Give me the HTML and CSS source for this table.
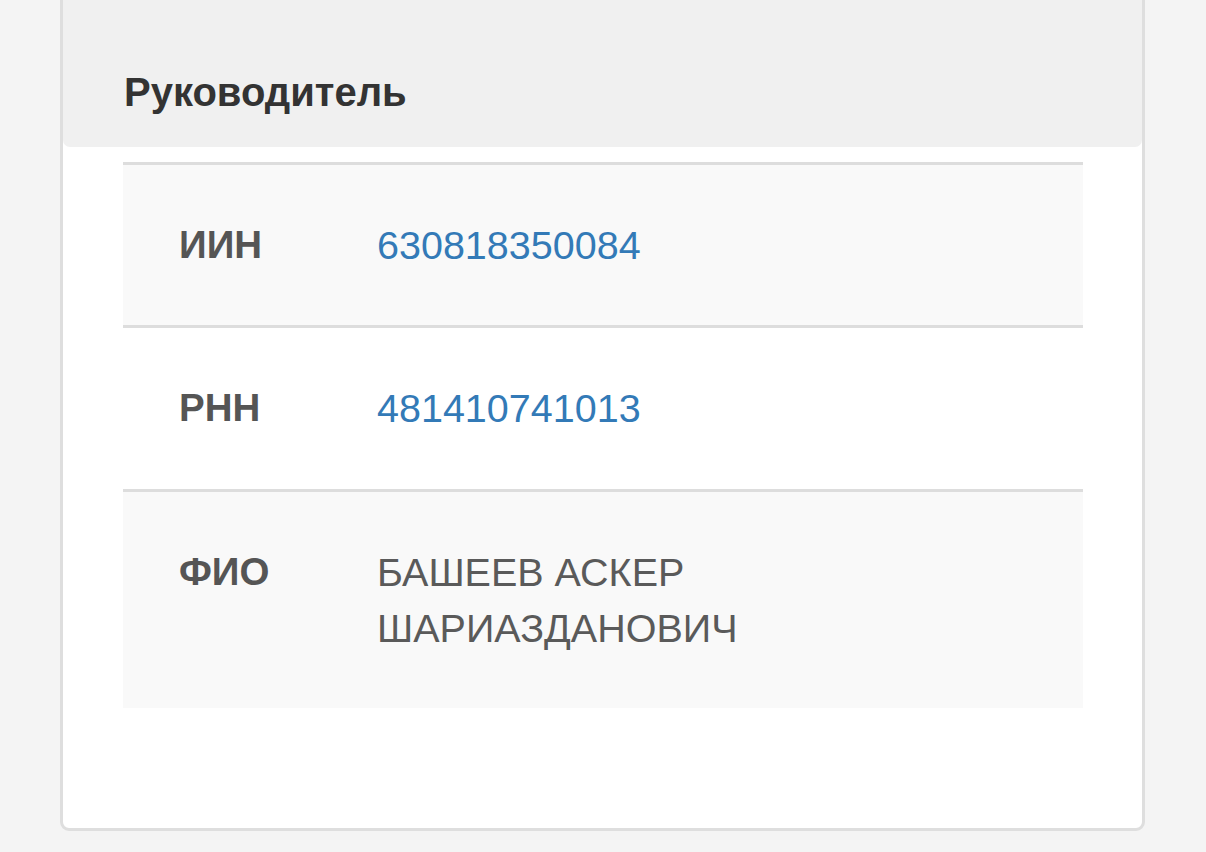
FILE: index.html
```html
<!DOCTYPE html>
<html lang="ru">
<head>
<meta charset="utf-8">
<title>Руководитель</title>
<link rel="stylesheet" href="styles.css">
</head>
<body>
<div class="page">
  <section class="panel">
    <header class="panel-heading">
      <h3 class="panel-title">Руководитель</h3>
    </header>
    <div class="panel-body">
      <div class="info-table">
        <div class="row striped">
          <div class="label">ИИН</div>
          <div class="value"><a href="#">630818350084</a></div>
        </div>
        <div class="row middle">
          <div class="label">РНН</div>
          <div class="value"><a href="#">481410741013</a></div>
        </div>
        <div class="row striped last">
          <div class="label">ФИО</div>
          <div class="value">БАШЕЕВ АСКЕР<br>ШАРИАЗДАНОВИЧ</div>
        </div>
      </div>
    </div>
  </section>
</div>
</body>
</html>
```

FILE: styles.css
```css
html, body {
  margin: 0;
  padding: 0;
  background: #f4f4f4;
  font-family: "Liberation Sans", Arial, sans-serif;
  height: 100%;
  overflow: hidden;
}

.page {
  padding: 0 61px 0 60px;
}

.panel {
  margin-top: -30px;
  background: #fff;
  border: 3px solid #dedede;
  border-radius: 9px;
  padding-bottom: 120px;
}

.panel-heading {
  background: #f0f0f0;
  border-radius: 6px 6px 7px 7px;
  padding: 95px 61px 31px;
}

.panel-title {
  margin: 0;
  font-size: 40px;
  line-height: 48px;
  font-weight: bold;
  color: #333;
}

.panel-body {
  padding: 15px 59px 0 60px;
}

.info-table {
  display: flex;
  flex-direction: column;
}

.row {
  display: grid;
  grid-template-columns: 254px 1fr;
  border-top: 3px solid #dddddd;
  padding: 52px 0 52px;
  font-size: 39.5px;
  line-height: 56px;
  color: #5a5a5a;
}

.row.striped {
  background: #f9f9f9;
}

.row.middle {
  padding-bottom: 53px;
}

.row.last {
  padding-bottom: 52px;
}

.label {
  font-weight: bold;
  font-size: 38.5px;
  padding-left: 56px;
  color: #555;
}

.value a {
  color: #337ab7;
  text-decoration: none;
}
```
